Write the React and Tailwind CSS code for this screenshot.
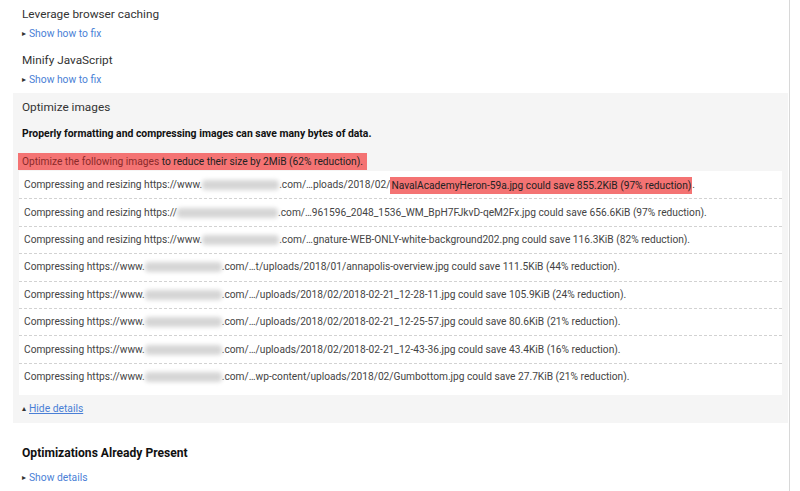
import React from 'react';

const Blur = ({ w }) => (
    <span
        className="inline-block h-[10px] bg-[#d6d6d6] blur-[2px] rounded-sm"
        style={{ width: w }}
    />
);

const Caret = ({ up }) => (
    <span className="inline-block w-[6px] text-[#333] text-[8px] leading-none mr-[1px] align-[1px]">
        {up ? '\u25B4' : '\u25B8'}
    </span>
);

const rows = [
    { pre: 'Compressing and resizing https://www.', blur: 77, mid: '.com/…ploads/2018/02/', hl: 'NavalAcademyHeron-59a.jpg could save 855.2KiB (97% reduction)', post: '.' },
    { pre: 'Compressing and resizing https://', blur: 101, mid: '.com/…961596_2048_1536_WM_BpH7FJkvD-qeM2Fx.jpg could save 656.6KiB (97% reduction).' },
    { pre: 'Compressing and resizing https://www.', blur: 77, mid: '.com/…gnature-WEB-ONLY-white-background202.png could save 116.3KiB (82% reduction).' },
    { pre: 'Compressing https://www.', blur: 77, mid: '.com/…t/uploads/2018/01/annapolis-overview.jpg could save 111.5KiB (44% reduction).' },
    { pre: 'Compressing https://www.', blur: 77, mid: '.com/…/uploads/2018/02/2018-02-21_12-28-11.jpg could save 105.9KiB (24% reduction).' },
    { pre: 'Compressing https://www.', blur: 77, mid: '.com/…/uploads/2018/02/2018-02-21_12-25-57.jpg could save 80.6KiB (21% reduction).' },
    { pre: 'Compressing https://www.', blur: 77, mid: '.com/…/uploads/2018/02/2018-02-21_12-43-36.jpg could save 43.4KiB (16% reduction).' },
    { pre: 'Compressing https://www.', blur: 77, mid: '.com/…wp-content/uploads/2018/02/Gumbottom.jpg could save 27.7KiB (21% reduction).' },
];

export default function App() {
    return (
        <div className="w-[800px] h-[491px] bg-white flex overflow-hidden text-[#333] text-[10.3px] leading-[14px]" style={{ fontFamily: 'Roboto, "Liberation Sans", sans-serif' }}>
            <div className="w-[790px] border-r border-[#d8d8d8] pl-[13px] pr-[1px]">
                {/* collapsed rules */}
                <div className="pl-[9px] pt-[5px]">
                    <div className="text-[11.8px] leading-[18px]">Leverage browser caching</div>
                    <div className="mt-[4px] text-[#4a7fd6]"><Caret />Show how to fix</div>
                    <div className="text-[11.8px] leading-[18px] mt-[10px]">Minify JavaScript</div>
                    <div className="mt-[4px] text-[#4a7fd6]"><Caret />Show how to fix</div>
                </div>

                {/* expanded rule */}
                <div className="mt-[6px] bg-[#f5f5f5] pt-[5px] pb-[7px]">
                    <div className="pl-[9px] text-[11.8px] leading-[18px]">Optimize images</div>
                    <div className="pl-[9px] mt-[11px] text-[10.4px] font-bold text-[#111]">
                        Properly formatting and compressing images can save many bytes of data.
                    </div>
                    <div className="pl-[5px] mt-[12px] flex">
                        <span className="bg-[#f47373] px-[4px] text-[10.2px] leading-[17px] text-[#222]">
                            <span className="text-[#8a2a2a]">Optimize the following images</span> to reduce their size by 2MiB (62% reduction).
                        </span>
                    </div>
                    <div className="ml-[6px] mr-[6px] mt-[1px] bg-white pt-[1px] pb-[4px]">
                        {rows.map((r, i) => (
                            <div
                                key={i}
                                className={`pl-[5px] h-[27.4px] flex items-center text-[10.2px] whitespace-nowrap text-[#444] ${i < rows.length - 1 ? 'border-b border-dashed border-[#d2d2d2]' : ''}`}
                            >
                                <span>{r.pre}</span>
                                <Blur w={r.blur} />
                                <span>{r.mid}</span>
                                {r.hl && <span className="bg-[#f47373] text-[#222] px-[1px] leading-[17px]">{r.hl}</span>}
                                {r.post && <span>{r.post}</span>}
                            </div>
                        ))}
                    </div>
                    <div className="pl-[9px] mt-[7px] text-[#4a7fd6]">
                        <Caret up /><span className="underline">Hide details</span>
                    </div>
                </div>

                <div className="pl-[9px] mt-[22px]">
                    <div className="text-[12.1px] leading-[16px] font-bold text-[#111]">Optimizations Already Present</div>
                    <div className="mt-[10px] text-[#4a7fd6]"><Caret />Show details</div>
                </div>
            </div>
        </div>
    );
}
